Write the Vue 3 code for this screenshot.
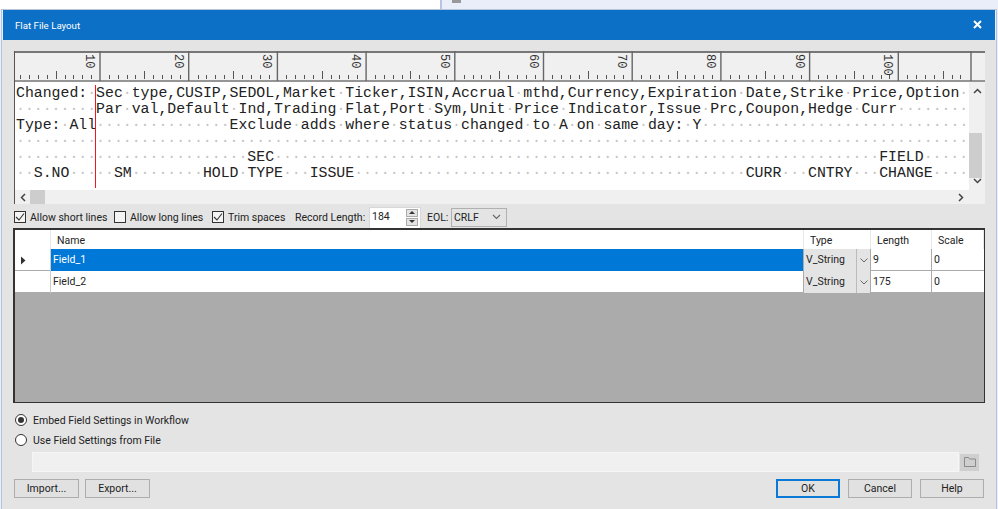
<script setup>
const COLS = 107
const place = (parts) => {
  const chars = new Array(COLS).fill(' ')
  for (const [col, text] of parts) {
    for (let i = 0; i < text.length; i++) chars[col + i] = text[i]
  }
  return chars.join('')
}
const rawLines = [
  place([[0, 'Changed: Sec type,CUSIP,SEDOL,Market Ticker,ISIN,Accrual mthd,Currency,Expiration Date,Strike Price,Option']]),
  place([[9, 'Par val,Default Ind,Trading Flat,Port Sym,Unit Price Indicator,Issue Prc,Coupon,Hedge Curr']]),
  place([[0, 'Type: All'], [24, 'Exclude adds where status changed to A on same day: Y']]),
  place([]),
  place([[26, 'SEC'], [97, 'FIELD']]),
  place([[2, 'S.NO'], [11, 'SM'], [21, 'HOLD'], [26, 'TYPE'], [33, 'ISSUE'], [82, 'CURR'], [89, 'CNTRY'], [97, 'CHANGE']])
]
const lines = rawLines.map((padded) => {
  const runs = []
  for (const part of padded.split(/( +)/)) {
    if (!part) continue
    const isDots = part[0] === ' '
    runs.push({ text: isDots ? '·'.repeat(part.length) : part, dots: isDots })
  }
  return runs
})
const MAJOR0 = 86
const STEP = 88.7
const majors = []
for (let i = 0; i < 10; i++) majors.push({ x: MAJOR0 + i * STEP, label: (i + 1) * 10 })
majors.push({ x: 957, label: '' })
const ticks = []
for (let i = 0; i < 12; i++) {
  const mid = MAJOR0 - 44.35 + i * STEP
  for (let k = -4; k <= 4; k++) {
    const x = Math.round(mid + k * 8.87) + 0.5
    if (x > 0 && x < 952) ticks.push({ x, y1: k === 0 ? 20 : 24 })
  }
}
const columns = ['', 'Name', 'Type', 'Length', 'Scale']
const rows = [
  { name: 'Field_1', length: '9', selected: true },
  { name: 'Field_2', length: '175', selected: false }
]
const options = [
  { label: 'Allow short lines', checked: true, width: 100 },
  { label: 'Allow long lines', checked: false, width: 98 },
  { label: 'Trim spaces', checked: true, width: 83 }
]
</script>

<template>
  <div class="page">
    <div class="backdrop">
      <div class="back-left"></div>
      <div class="back-right"><span class="back-icon"></span></div>
    </div>
    <div class="window">
      <div class="titlebar">
        <span>Flat File Layout</span>
        <svg class="close" width="9" height="9" viewBox="0 0 9 9"><path d="M1 1l7 7M8 1l-7 7" stroke="#fff" stroke-width="2" /></svg>
      </div>
      <div class="body">
        <div class="editor">
          <svg class="ruler" width="971" height="31" viewBox="0 0 971 31">
            <rect width="971" height="31" fill="#f0f0f0" />
            <line x1="0" y1="1" x2="971" y2="1" stroke="#777" stroke-width="2" />
            <line x1="0" y1="30" x2="971" y2="30" stroke="#777" stroke-width="1.5" />
            <line x1="0.5" y1="0" x2="0.5" y2="31" stroke="#555" />
            <line v-for="t in ticks" :key="t.x" :x1="t.x" :y1="t.y1" :x2="t.x" y2="28" stroke="#555" />
            <g v-for="m in majors" :key="m.x">
              <line :x1="m.x" y1="0" :x2="m.x" y2="30" stroke="#666" stroke-width="1.4" />
              <text v-if="m.label" class="ruler-num" :transform="`translate(${m.x - 14} 3) rotate(90)`">{{ m.label }}</text>
            </g>
          </svg>
          <div class="text-area">
            <div v-for="(runs, i) in lines" :key="i" class="line"><span v-for="(r, j) in runs" :key="j" :class="{ dots: r.dots }">{{ r.text }}</span></div>
            <div class="red-line"></div>
          </div>
          <div class="vscroll">
            <svg width="9" height="6" viewBox="0 0 9 6"><path d="M1 5l3.500-3.500L8 5" fill="none" stroke="#444" stroke-width="1.5" /></svg>
            <div class="vtrack"><div class="vthumb"></div></div>
            <svg width="9" height="6" viewBox="0 0 9 6"><path d="M1 1l3.500 3.500L8 1" fill="none" stroke="#444" stroke-width="1.5" /></svg>
          </div>
          <div class="hscroll">
            <svg width="6" height="9" viewBox="0 0 6 9"><path d="M5 1L1.500 4.500 5 8" fill="none" stroke="#444" stroke-width="1.5" /></svg>
            <div class="hthumb"></div>
            <svg class="hright" width="6" height="9" viewBox="0 0 6 9"><path d="M1 1l3.500 3.500L1 8" fill="none" stroke="#444" stroke-width="1.5" /></svg>
          </div>
          <div class="corner"></div>
        </div>

        <div class="options">
          <label v-for="o in options" :key="o.label" class="check" :style="{ width: o.width + 'px' }">
            <span class="box">
              <svg v-if="o.checked" width="10" height="10" viewBox="0 0 10 10"><path d="M1 5l3 3 5-6.500" fill="none" stroke="#333" stroke-width="1.1" /></svg>
            </span>
            {{ o.label }}
          </label>
          <span class="rec-label">Record Length:</span>
          <div class="spin">
            <span class="spin-value">184</span>
            <div class="spin-btns">
              <span class="spin-btn"><i class="tri up"></i></span>
              <span class="spin-btn"><i class="tri down"></i></span>
            </div>
          </div>
          <span class="eol-label">EOL:</span>
          <div class="select">
            <span>CRLF</span>
            <svg width="9" height="6" viewBox="0 0 9 6"><path d="M1 1l3.500 3.500L8 1" fill="none" stroke="#666" stroke-width="1.1" /></svg>
          </div>
        </div>

        <div class="grid">
          <div class="grid-rows">
            <div class="g-row head">
              <div v-for="(c, i) in columns" :key="i" class="g-cell">{{ c }}</div>
            </div>
            <div v-for="r in rows" :key="r.name" class="g-row data" :class="{ selected: r.selected }">
              <div class="g-cell rowhead">
                <svg v-if="r.selected" width="6" height="9" viewBox="0 0 6 9"><path d="M1 0.5l4.500 4-4.500 4z" fill="#333" /></svg>
              </div>
              <div class="g-cell name">{{ r.name }}</div>
              <div class="g-cell type">
                <span class="type-val">V_String</span>
                <span class="type-arrow"><svg width="8" height="5" viewBox="0 0 8 5"><path d="M0.5 0.500L4 4l3.500-3.500" fill="none" stroke="#666" /></svg></span>
              </div>
              <div class="g-cell">{{ r.length }}</div>
              <div class="g-cell">0</div>
            </div>
          </div>
        </div>

        <div class="radios">
          <label class="radio"><span class="dot on"></span>Embed Field Settings in Workflow</label>
          <label class="radio"><span class="dot"></span>Use Field Settings from File</label>
        </div>

        <div class="file-row">
          <div class="file-input"></div>
          <div class="folder">
            <svg width="14" height="12" viewBox="0 0 14 12"><path d="M1.500 10.500v-9h4l1 1.500h6v7.500z" fill="none" stroke="#8a8a8a" /></svg>
          </div>
        </div>

        <div class="buttons">
          <button class="btn">Import...</button>
          <button class="btn">Export...</button>
          <span class="spacer"></span>
          <div class="right-btns">
            <button class="btn primary">OK</button>
            <button class="btn">Cancel</button>
            <button class="btn">Help</button>
          </div>
        </div>
      </div>
    </div>
  </div>
</template>

<style>
html, body { margin: 0; padding: 0; background: #e9eef8; overflow: hidden; }
</style>

<style scoped>
.page {
  width: 998px;
  height: 509px;
  display: flex;
  flex-direction: column;
  font-family: Roboto, "Noto Sans", sans-serif;
  font-size: 10.5px;
  color: #222;
  overflow: hidden;
}
.backdrop { height: 9px; display: flex; flex: none; }
.back-left { width: 440px; background: #fff; }
.back-right { flex: 1; background: #e9eef8; border-left: 2px solid #b9c4de; padding-left: 10px; }
.back-icon { display: block; width: 9px; height: 3px; background: #999; }
.window {
  flex: 1;
  margin: 0 1px;
  border: 1px solid #b5c4da;
  border-width: 1px 1px 0 1px;
  display: flex;
  flex-direction: column;
  min-height: 0;
}
.titlebar {
  height: 30px;
  flex: none;
  margin: 0 1px;
  background: #0b70c6;
  color: #fff;
  display: flex;
  align-items: center;
  justify-content: space-between;
  padding: 0 13px 0 12px;
  font-size: 9.7px;
}
.close { margin-top: -2px; }
.body {
  flex: 1;
  background: #e4e4e4;
  padding: 11px 11px 0 12px;
  display: flex;
  flex-direction: column;
  min-height: 0;
}
.editor {
  width: 971px;
  display: grid;
  grid-template-columns: 955px 16px;
  grid-template-rows: 31px 108px 14px;
  flex: none;
}
.ruler { grid-column: 1 / 3; display: block; }
.ruler-num { font-family: "Liberation Mono", monospace; font-size: 12px; fill: #333; }
.text-area {
  position: relative;
  background: #fff;
  overflow: hidden;
  border-left: 1px solid #555;
  padding: 3px 0 0 1px;
  font-family: "Liberation Mono", "Courier New", monospace;
  font-size: 14.83px;
  color: #222;
  box-sizing: border-box;
}
.line { height: 16px; line-height: 16px; white-space: pre; }
.dots { color: #c4c4c4; }
.red-line { position: absolute; left: 80px; top: 3px; bottom: 2px; width: 1px; background: #f01820; }
.vscroll {
  background: #f0f0f0;
  display: flex;
  flex-direction: column;
  align-items: center;
  padding: 6px 0;
  box-sizing: border-box;
}
.vtrack { flex: 1; width: 100%; padding-top: 39px; box-sizing: border-box; }
.vthumb { height: 45px; width: 13px; background: #cdcdcd; }
.hscroll {
  background: #f0f0f0;
  display: flex;
  align-items: center;
  padding-left: 5px;
  border-left: 1px solid #555;
  box-sizing: border-box;
}
.hthumb { width: 15px; height: 14px; background: #cdcdcd; margin-left: 4px; }
.hright { margin-left: auto; margin-right: 5px; }
.corner { background: #f0f0f0; }
.options {
  height: 25px;
  flex: none;
  display: flex;
  align-items: center;
  padding-top: 1px;
  box-sizing: border-box;
  white-space: nowrap;
}
.check { display: flex; align-items: center; gap: 4px; flex: none; }
.box {
  width: 12px;
  height: 12px;
  border: 1px solid #333;
  background: #f4f4f4;
  box-sizing: border-box;
  display: flex;
  align-items: center;
  justify-content: center;
  flex: none;
}
.rec-label { width: 74px; flex: none; }
.spin {
  width: 52px;
  height: 21px;
  background: #fff;
  border: 1px solid #d8d8d8;
  border-bottom: 0;
  display: flex;
  justify-content: space-between;
  padding: 0 2px 0 2px;
  box-sizing: border-box;
  flex: none;
}
.spin-value { line-height: 17px; }
.spin-btns { width: 12px; display: flex; flex-direction: column; gap: 1px; padding: 1px 0 2px; }
.spin-btn { flex: 1; background: #e4e4e4; border: 1px solid #aaa; display: flex; align-items: center; justify-content: center; box-sizing: border-box; }
.tri { width: 0; height: 0; border-left: 3px solid transparent; border-right: 3px solid transparent; }
.tri.up { border-bottom: 3px solid #333; }
.tri.down { border-top: 3px solid #333; }
.eol-label { margin-left: 6px; width: 24px; flex: none; }
.select {
  width: 56px;
  height: 19px;
  background: #e4e4e4;
  border: 1px solid #b0b0b0;
  box-sizing: border-box;
  display: flex;
  align-items: center;
  justify-content: space-between;
  padding: 0 5px 0 2px;
  flex: none;
}
.grid {
  width: 972px;
  height: 175px;
  margin-left: -1px;
  margin-top: -1px;
  border: 2px solid #333;
  border-right-width: 1px;
  border-bottom-width: 1px;
  box-sizing: border-box;
  background: #ababab;
  flex: none;
}
.grid-rows { display: flex; flex-direction: column; }
.g-row {
  display: grid;
  grid-template-columns: 36px 753px 67px 61px 1fr;
  background: #fff;
}
.g-row.head { height: 19px; }
.g-row.data { height: 21px; border-bottom: 1px solid #ababab; }
.g-cell {
  padding-left: 2px;
  line-height: 22px;
  border-right: 1px solid #ababab;
  box-sizing: border-box;
  min-width: 0;
}
.g-row.head .g-cell { padding-left: 6px; line-height: 21px; border-right: 1px solid #e8e8e8; border-bottom: 1px solid #ddd; }
.g-cell:last-child { border-right: 0; }
.g-row .rowhead { display: flex; align-items: center; padding-left: 5px; border-right: 1px solid #ccc; }
.selected .name { background: #0078d7; color: #fff; }
.g-row .type { display: flex; padding: 0; background: #e4e4e4; }
.type-val { flex: 1; padding-left: 2px; border-right: 1px solid #bbb; }
.type-arrow { width: 13px; display: flex; align-items: center; justify-content: center; }
.radios {
  display: flex;
  flex-direction: column;
  gap: 2px;
  padding: 8px 0 0 1px;
  flex: none;
}
.radio { display: flex; align-items: center; gap: 6px; height: 18px; }
.dot {
  width: 12px;
  height: 12px;
  border-radius: 50%;
  border: 1px solid #333;
  background: #fff;
  box-sizing: border-box;
  display: flex;
  align-items: center;
  justify-content: center;
  flex: none;
}
.dot.on::after { content: ""; width: 6px; height: 6px; border-radius: 50%; background: #333; }
.file-row { display: flex; align-items: center; padding: 3px 0 0 18px; gap: 1px; flex: none; }
.file-input { width: 927px; height: 20px; background: #f0f0f0; border: 1px solid #f6f6f6; box-sizing: border-box; }
.folder {
  width: 19px;
  height: 17px;
  background: #cfcfcf;
  display: flex;
  align-items: center;
  justify-content: center;
}
.buttons { display: flex; gap: 6px; padding-top: 7px; flex: none; }
.spacer { flex: 1; }
.right-btns { display: flex; gap: 8px; margin-right: 1px; }
.btn {
  width: 65px;
  height: 19px;
  padding: 0;
  background: #e1e1e1;
  border: 1px solid #adadad;
  font: inherit;
  color: #222;
}
.right-btns .btn { width: 64px; }
.btn.primary { border: 2px solid #0a78d6; }
</style>
